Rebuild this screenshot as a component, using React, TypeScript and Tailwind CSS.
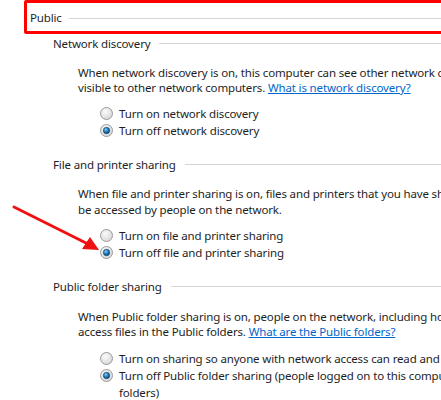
import React from 'react'

const FONT = { fontFamily: '"Noto Sans", "Open Sans", sans-serif' }

function Radio({ checked }: { checked?: boolean }) {
	return (
		<svg width="13" height="13" viewBox="0 0 13 13" className="shrink-0">
			<defs>
				<radialGradient id="rb" cx="0.4" cy="0.35" r="0.7">
					<stop offset="0" stopColor="#fbfbfb" />
					<stop offset="1" stopColor="#d6d6d6" />
				</radialGradient>
				<radialGradient id="rd" cx="0.4" cy="0.35" r="0.7">
					<stop offset="0" stopColor="#8fd0f5" />
					<stop offset="0.5" stopColor="#1c7ec0" />
					<stop offset="1" stopColor="#0b3e6e" />
				</radialGradient>
			</defs>
			<circle cx="6.5" cy="6.5" r="6" fill="url(#rb)" stroke="#9a9a9a" strokeWidth="1" />
			{checked && <circle cx="6.5" cy="6.5" r="3.2" fill="url(#rd)" stroke="#173c5e" strokeWidth="0.6" />}
		</svg>
	)
}

function Header({ children, className = '' }: { children: React.ReactNode; className?: string }) {
	return (
		<div className={`flex h-4 items-center gap-[9px] pl-[53px] ${className}`}>
			<span className="whitespace-nowrap">{children}</span>
			<div className="mt-px h-px flex-1 bg-[#d5d5d5]" />
		</div>
	)
}

function Option({ checked, children }: { checked?: boolean; children: React.ReactNode }) {
	return (
		<div className="flex h-[17px] items-center gap-[6px] whitespace-nowrap pl-[100px]">
			<Radio checked={checked} />
			<span>{children}</span>
		</div>
	)
}

export default function App() {
	return (
		<div
			className="relative h-[400px] w-[441px] overflow-hidden bg-white text-[11.5px] leading-[15px] tracking-[-0.15px] text-[#1e1e1e]"
			style={FONT}
		>
			<div className="ml-[24px] flex h-[34px] w-[440px] items-center gap-[7px] rounded-[2px] border-[3px] border-[#ff0000] pl-[3px]">
				<span>Public</span>
				<div className="mt-[2px] h-px flex-1 bg-[#d5d5d5]" />
			</div>

			<Header className="mt-[1px]">Network discovery</Header>
			<p className="mt-[14px] whitespace-nowrap pl-[78px]">
				When network discovery is on, this computer can see other network computers and devices and is
				<br />
				visible to other network computers.{' '}
				<span className="text-[#0066cc] underline">What is network discovery?</span>
			</p>
			<div className="mt-[10px]">
				<Option>Turn on network discovery</Option>
				<Option checked>Turn off network discovery</Option>
			</div>

			<Header className="mt-[17px]">File and printer sharing</Header>
			<p className="mt-[14px] whitespace-nowrap pl-[78px] leading-[16px]">
				When file and printer sharing is on, files and printers that you have shared from this computer can
				<br />
				be accessed by people on the network.
			</p>
			<div className="mt-[9px]">
				<Option>Turn on file and printer sharing</Option>
				<Option checked>Turn off file and printer sharing</Option>
			</div>

			<Header className="mt-[17px]">Public folder sharing</Header>
			<p className="mt-[15px] whitespace-nowrap pl-[78px]">
				When Public folder sharing is on, people on the network, including homegroup members, can
				<br />
				access files in the Public folders.{' '}
				<span className="text-[#0066cc] underline">What are the Public folders?</span>
			</p>
			<div className="mt-[11px]">
				<Option>Turn on sharing so anyone with network access can read and write files in the Public folders</Option>
				<Option checked>Turn off Public folder sharing (people logged on to this computer can still access these</Option>
				<div className="h-[17px] pl-[119px] leading-[17px]">folders)</div>
			</div>

			<svg className="absolute left-0 top-[200px]" width="110" height="60" viewBox="0 0 110 60">
				<line x1="14" y1="7" x2="88" y2="44" stroke="#ee1111" strokeWidth="3" strokeLinecap="round" />
				<polygon points="99,50 82,49 90,37" fill="#ee1111" />
			</svg>
		</div>
	)
}
